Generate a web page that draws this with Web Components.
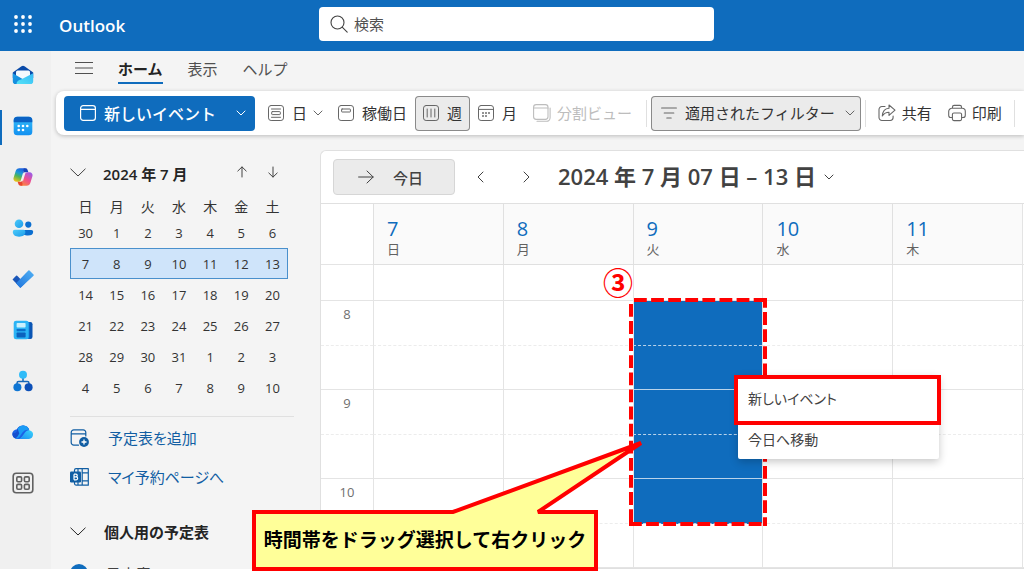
<!DOCTYPE html>
<html lang="ja">
<head>
<meta charset="utf-8">
<title>Outlook - 予定表</title>
<style>
  html, body { margin: 0; height: 100%; background: #fff; }
  body { overflow: hidden; font-family: "Open Sans", "Noto Sans CJK JP", sans-serif; font-size: 15px; color: #424242; }
</style>
</head>
<body>
<outlook-app></outlook-app>

<script>
const JP = '"Noto Sans CJK JP", sans-serif';

/* Registers an element whose shadow root is cloned from one template. */
function define(name, css, html, setup) {
  const template = document.createElement('template');
  template.innerHTML = `<style>*{box-sizing:border-box}${css}</style>${html}`;
  customElements.define(name, class extends HTMLElement {
    constructor() {
      super();
      this.attachShadow({ mode: 'open' }).appendChild(template.content.cloneNode(true));
    }
    connectedCallback() { if (setup) setup(this, this.shadowRoot); }
  });
}

/* ---------- icons ---------- */
const line = (d, w = 1) => `<g fill="none" stroke="currentColor" stroke-width="${w}" stroke-linecap="round" stroke-linejoin="round">${d}</g>`;
const ICONS = {
  waffle: ['18 18', [0, 1, 2].map(r => [0, 1, 2].map(c => `<circle cx="${2 + c * 7}" cy="${2 + r * 7}" r="1.9" fill="#fff"/>`).join('')).join('')],
  search: ['18 18', line('<circle cx="7.5" cy="7.5" r="6.5"/><path d="M12.200 12.200l5 5"/>', 1.1)],
  menu: ['18 14', line('<path d="M.5 1.5h17M.5 7h17M.5 12.5h17"/>', 1.2)],
  calendar: ['16 16', line('<rect x=".6" y=".6" width="14.8" height="14.8" rx="2.6"/><path d="M.6 4.4h14.8"/>', 1.2)],
  day: ['16 16', line('<rect x=".5" y=".5" width="15" height="15" rx="2.6"/><path d="M3.5 4h9M3.5 12.3h9"/><rect x="3.7" y="6.6" width="8.6" height="3" rx=".6"/>')],
  workweek: ['16 16', line('<rect x=".5" y=".5" width="15" height="15" rx="2.6"/><rect x="3.6" y="4" width="8.8" height="3" rx=".5"/>')],
  week: ['16 16', line('<rect x=".5" y=".5" width="15" height="15" rx="2.6"/><path d="M4.2 4v8M8 4v8M11.8 4v8"/>')],
  month: ['16 16', line('<rect x=".5" y=".5" width="15" height="15" rx="2.6"/><path d="M.5 4.4h15"/>') + [[5, 8], [8, 8], [11, 8], [5, 11], [8, 11]].map(([x, y]) => `<circle cx="${x}" cy="${y}" r=".95" fill="currentColor"/>`).join('')],
  split: ['18 18', line('<rect x=".6" y=".6" width="14.4" height="14.8" rx="2.6"/><path d="M.6 4h14.4M4 17.3h9.5a3.6 3.6 0 0 0 3.6-3.6V4"/>', 1.1)],
  filter: ['16 12', line('<path d="M.6 1h14.8M3.2 6h9.6M5.8 11h4.4"/>', 1.1)],
  share: ['18 18', line('<path d="M7 2.5H4A2.9 2.9 0 0 0 1 5.400v8.200A2.900 2.900 0 0 0 4 16.500h8.200a2.900 2.900 0 0 0 2.900-2.900V12"/><path d="M11 1l6 5.200-6 5.200V8.300C8 8.300 6 9.500 4.300 12 4.600 7.500 7 4.500 11 4.200z"/>', 1.1)],
  print: ['18 18', line('<path d="M4.300 13.500H3a2.300 2.300 0 0 1-2.300-2.300V7.500A3.200 3.200 0 0 1 3.900 4.300h10.200a3.200 3.200 0 0 1 3.200 3.200v3.700a2.300 2.300 0 0 1-2.300 2.300h-1.300M4.500 4.300V3a1.600 1.600 0 0 1 1.600-1.600h5.800A1.600 1.600 0 0 1 13.500 3v1.300"/><rect x="4.400" y="9" width="9.200" height="7.600" rx="1.500"/>', 1.1)],
  down: ['10 6', line('<path d="M1 1l4 4 4-4"/>', 1)],
  expand: ['16 9', line('<path d="M.8 1L8 8l7.200-7"/>', 1)],
  prev: ['7 12', line('<path d="M6 1L1 6l5 5"/>', 1)],
  next: ['7 12', line('<path d="M1 1l5 5-5 5"/>', 1)],
  up: ['10 12', line('<path d="M5 11V1M.8 5L5 .9 9.200 5"/>', 1)],
  dn: ['10 12', line('<path d="M5 1v10M.8 7L5 11.100 9.200 7"/>', 1)],
  arrow: ['16 14', line('<path d="M.6 7h14.600M9 1l6.200 6L9 13"/>', 1)],
  addcal: ['20 18', line('<path d="M8.500 16.200H3.800A2.600 2.600 0 0 1 1.200 13.600V3.400A2.600 2.600 0 0 1 3.800.800h9.400a2.600 2.600 0 0 1 2.600 2.600V7M1.200 4.800h14.600"/>', 1.2) + '<circle cx="14" cy="13" r="4.900" fill="currentColor"/><path d="M14 10.500v5M11.500 13h5" stroke="#fff" stroke-width="1.300"/>'],
  bookings: ['20 18', line('<path d="M4.500 4V2.200A1.600 1.600 0 0 1 6 .7h12.300v16.500H6a1.600 1.600 0 0 1-1.500-1.600V14M12.200.700v16.500M8 .700V4M8 14v3M12 4.800h6.300M12 12.800h6.300"/>', 1.2) + '<rect x="0" y="3.500" width="11" height="11" rx="1.200" fill="currentColor"/><path d="M4 6.200v5.600M4 6.200h1.900a1.300 1.300 0 0 1 0 2.700H4h2.200a1.400 1.400 0 0 1 0 2.900H4" fill="none" stroke="#fff" stroke-width="1.200"/>'],
  dot: ['18 18', '<circle cx="9" cy="9" r="9" fill="#0f6cbd"/><path d="M5 9l3 3 5-6" fill="none" stroke="#fff" stroke-width="1.500"/>'],

  mail: ['22 20', `<defs><linearGradient id="a" x1="0" y1="0" x2="1" y2="1"><stop offset="0" stop-color="#1b9de8"/><stop offset="1" stop-color="#0f7fd6"/></linearGradient><linearGradient id="b" x1="1" y1="0" x2="0" y2="1"><stop offset="0" stop-color="#35b8f5"/><stop offset="1" stop-color="#55e3f7"/></linearGradient></defs>
    <path d="M.800 7.500L9.500 1.300a2.600 2.600 0 0 1 3 0l8.700 6.200V13H.800z" fill="#0a4aa8"/>
    <rect x="4" y="5.600" width="14" height="9" rx="1.600" fill="#f4fafe"/>
    <path d="M.800 8.200L11 14.200l3 4.900H3.600A2.800 2.800 0 0 1 .800 16.300z" fill="url(#a)"/>
    <path d="M21.200 8.200v8.100a2.800 2.800 0 0 1-2.800 2.800H4.500c0-2.700 2-4.300 4.500-4.600z" fill="url(#b)"/>`],
  cal: ['20 20', `<defs><linearGradient id="a" x1="0" y1="0" x2="0" y2="1"><stop offset="0" stop-color="#35bdf8"/><stop offset="1" stop-color="#1290f0"/></linearGradient></defs>
    <rect x=".700" y=".700" width="18.600" height="18.600" rx="3.600" fill="url(#a)"/><path d="M.700 6.200V4.300A3.600 3.600 0 0 1 4.300.700h11.400a3.600 3.600 0 0 1 3.600 3.600v1.900z" fill="#0b62c4"/>
    ${[[5.7, 10], [10, 10], [14.3, 10], [5.7, 14], [10, 14]].map(([x, y]) => `<circle cx="${x}" cy="${y}" r="1.300" fill="#fff"/>`).join('')}`],
  copilot: ['20 18', `<defs><linearGradient id="a" x1=".600" y1="0" x2=".200" y2="1"><stop offset="0" stop-color="#1d5fe0"/><stop offset=".350" stop-color="#1b9ad8"/><stop offset=".600" stop-color="#4db45a"/><stop offset="1" stop-color="#f2c414"/></linearGradient><linearGradient id="b" x1=".800" y1="0" x2=".200" y2="1"><stop offset="0" stop-color="#9a5be8"/><stop offset=".500" stop-color="#ef4f8e"/><stop offset="1" stop-color="#fb8a3c"/></linearGradient></defs>
    <path d="M13.500 2.200A3 3 0 0 0 10.700.300H6.400A4 4 0 0 0 2.600 3.200L.600 9.800a3 3 0 0 0 2.800 3.900h2.300c1 0 1.900-.700 2.200-1.700l2.300-7.800c.300-1 1-2 2-2z" fill="url(#a)"/>
    <path d="M10.700.300h1.800c1 0 1.800.700 2.100 1.600l.8 2.400h-3.200c-1 0-1.700.500-2 1.400z" fill="#1745b8"/>
    <path d="M6.500 15.800a3 3 0 0 0 2.800 1.900h4.300a4 4 0 0 0 3.800-2.900l2-6.600a3 3 0 0 0-2.800-3.900h-2.300c-1 0-1.900.700-2.200 1.700l-2.300 7.800c-.300 1-1 2-2 2z" fill="url(#b)"/>
    <path d="M9.300 17.700H7.500c-1 0-1.800-.700-2.100-1.600l-.8-2.400h3.200c1 0 1.700-.500 2-1.400z" fill="#e8472e"/>`],
  people: ['22 18', `<defs><linearGradient id="a" x1="0" y1="0" x2="1" y2="1"><stop offset="0" stop-color="#4ccbfa"/><stop offset="1" stop-color="#1c9bea"/></linearGradient></defs>
    <circle cx="16.300" cy="5.600" r="3.100" fill="#0b6fd0"/><path d="M10 11h9.400a1.800 1.800 0 0 1 1.800 1.800c0 2.600-2 3.800-5.200 3.800-3.400 0-6-1.200-6-3.800z" fill="#0b6fd0"/>
    <circle cx="7" cy="4.700" r="4.300" fill="url(#a)"/><path d="M2.800 10.800h8.600a2 2 0 0 1 2 2c0 3.200-2.600 4.900-6.300 4.900S.800 16 .800 12.800a2 2 0 0 1 2-2z" fill="url(#a)"/>`],
  todo: ['22 18', `<defs><linearGradient id="a" x1="0" y1="1" x2="1" y2="0"><stop offset="0" stop-color="#1f74dc"/><stop offset="1" stop-color="#4fb0f4"/></linearGradient></defs>
    <path d="M.500 9.400l3.600-3.600a.8.800 0 0 1 1.100 0l7.600 7.600-4.400 4.300z" fill="#1a56b8"/><path d="M4 13.200L16.400.600a.8.800 0 0 1 1.100 0l4 4a.8.800 0 0 1 0 1.100L8.900 17.600a.8.800 0 0 1-1.100 0z" fill="url(#a)"/>`],
  news: ['20 20', `<rect x="10" y="2" width="9.500" height="17" rx="2.200" fill="#0a55b4"/><rect x="14" y="2" width="2.500" height="17" fill="#1276d2"/>
    <rect x=".700" y=".700" width="15" height="18.600" rx="2.400" fill="#2cb4f5"/><rect x="3.600" y="3" width="9" height="4.600" rx=".8" fill="#c9f0fd"/><rect x="3.600" y="9" width="9" height="2.200" rx=".6" fill="#0c6fcb"/><rect x="3.600" y="12.500" width="9" height="5" rx=".8" fill="#0c62bd"/>`],
  org: ['20 22', `<path d="M10 8v3.500M4 15v-1.800a1.700 1.700 0 0 1 1.700-1.700h8.600a1.700 1.700 0 0 1 1.700 1.700V15" fill="none" stroke="#1667b8" stroke-width="1.500"/>
    <circle cx="10" cy="4.700" r="4" fill="#30bcf8"/><circle cx="4.400" cy="17.300" r="4" fill="#0f76d4"/><circle cx="15.600" cy="17.300" r="4" fill="#0c50b8"/>`],
  cloud: ['22 16', `<defs><linearGradient id="a" x1="0" y1="1" x2="1" y2="0"><stop offset="0" stop-color="#1b8df2"/><stop offset="1" stop-color="#3ad4fb"/></linearGradient></defs>
    <path d="M5.200 14.900A4.800 4.800 0 0 1 5 5.300a6.600 6.600 0 0 1 12.300 1l-9 8.600z" fill="#1c63e6"/>
    <path d="M5.600 4.400A6.600 6.600 0 0 1 17 5.600c-3-.8-5 .5-6.500 2.500l-3 4.200c-1 1.400-2.500 2.600-4.500 2A4.800 4.800 0 0 1 .900 8.500c2 1.500 3 .2 4-1.200z" fill="#164fce"/>
    <path d="M5.600 4.400A6.600 6.600 0 0 1 17.300 6c-3-.8-5.300.5-6.800 2.500l-3 4.200c-1 1.400-2.500 2.300-4.200 1.700 2-1 2.700-3 4-5z" fill="#1a9bf5"/>
    <path d="M7 14.900c2-.5 2.800-2 4-3.600l2-2.700c1.500-2 3.500-2.600 5-2.100a4.300 4.300 0 0 1-1 8.400z" fill="url(#a)"/>`],
  apps: ['22 22', `<g fill="none" stroke="#616161" stroke-width="1.600"><rect x="1.200" y="1.200" width="19.600" height="19.600" rx="3"/><rect x="4.800" y="4.900" width="4.800" height="4.800" rx="1.200"/><rect x="12.400" y="4.900" width="4.800" height="4.800" rx="1.200"/><rect x="4.800" y="12.400" width="4.800" height="4.800" rx="1.200"/><rect x="12.400" y="12.400" width="4.800" height="4.800" rx="1.200"/></g>`]
};
define('ol-icon', ':host{display:inline-flex;flex:none}.art{display:flex}svg{display:block}', '<span class="art"></span>', (host, root) => {
  const [size, body] = ICONS[host.getAttribute('name')];
  const [w, h] = size.split(' ');
  root.querySelector('.art').innerHTML = `<svg width="${w}" height="${h}" viewBox="0 0 ${w} ${h}" aria-hidden="true">${body}</svg>`;
});

/* ---------- top bar ---------- */
define('top-bar', `
  :host{display:grid;grid-template-columns:319px minmax(120px,395px) 1fr;align-items:center;height:51px;background:#0f6cbd;color:#fff}
  .brand{display:flex;align-items:center;gap:27px;padding-left:14px;font-size:17px;font-weight:600}
  button{display:flex;padding:0 0 3px;border:0;background:none}
  label{display:flex;align-items:center;gap:6px;height:34px;margin-bottom:3px;padding:0 11px;background:#fff;border-radius:4px;color:#424242}
  input{flex:1;min-width:0;border:0;outline:0;padding:0 0 2px;background:none;font:15px ${JP};color:#424242}
  input::placeholder{color:#505050;opacity:1}`, `
  <div class="brand"><button aria-label="アプリ起動ツール"><ol-icon name="waffle"></ol-icon></button><span>Outlook</span></div>
  <label><ol-icon name="search"></ol-icon><input type="search" placeholder="検索" aria-label="検索"></label>`);

/* ---------- app rail ---------- */
define('rail-link', `
  :host{display:block}
  a{display:flex;justify-content:center;align-items:center;height:51px;padding:0 7px 3px 0;border-left:2px solid transparent}
  :host([current]) a{border-image:linear-gradient(transparent 8px,#0f6cbd 8px,#0f6cbd 43px,transparent 43px) 0 0 0 2}`,
  '<a href="#"></a>', (host, root) => {
    const a = root.querySelector('a');
    a.setAttribute('aria-label', host.getAttribute('label'));
    a.innerHTML = `<ol-icon name="${host.getAttribute('icon')}"></ol-icon>`;
  });
define('app-rail', ':host{display:block;background:#f0f0f0}nav{display:flex;flex-direction:column}', `
  <nav>
    <rail-link icon="mail" label="メール"></rail-link>
    <rail-link icon="cal" label="予定表" current></rail-link>
    <rail-link icon="copilot" label="Copilot"></rail-link>
    <rail-link icon="people" label="連絡先"></rail-link>
    <rail-link icon="todo" label="To Do"></rail-link>
    <rail-link icon="news" label="ニュースレター"></rail-link>
    <rail-link icon="org" label="組織エクスプローラー"></rail-link>
    <rail-link icon="cloud" label="OneDrive"></rail-link>
    <rail-link icon="apps" label="その他のアプリ"></rail-link>
  </nav>`);

/* ---------- menu tabs ---------- */
define('menu-tabs', `
  :host{display:flex;align-items:center;gap:25px;height:40px;padding-left:24px;font-family:${JP}}
  button{display:flex;padding:0;border:0;background:none;font:15px/30px ${JP};color:#505050}
  .menu{padding-bottom:6px}
  .on{font-weight:700;color:#242424;box-shadow:inset 0 -2px #0f6cbd}
  .tabs{display:flex;gap:25px;padding-bottom:4px}`, `
  <button class="menu" aria-label="メニュー"><ol-icon name="menu"></ol-icon></button>
  <div class="tabs"><button class="on">ホーム</button><button>表示</button><button>ヘルプ</button></div>`);

/* ---------- ribbon ---------- */
define('tool-button', `
  :host{display:block;flex:none}
  button{display:flex;align-items:center;gap:8px;height:35px;padding:0 8px 1px;border:0;border-radius:4px;background:none;font:15px ${JP};color:#333;white-space:nowrap}
  ol-icon{color:#666}
  :host([wide]) button{gap:6px}
  :host([pressed]) button{background:#ebebeb;box-shadow:inset 0 0 0 1px #8a8a8a}
  :host([menu]) button{padding-right:7px}
  .down{margin-left:-2px}
  :host([filter]) button{padding:0 6px 1px 10px}
  :host([filter]) .down{margin-left:2px}
  :host([disabled]) button, :host([disabled]) ol-icon{color:#bdbdbd}
  :host([disabled]) button{padding-right:10px}
  :host([primary]) button{width:191px;padding:0 9px 1px 16px;background:#0f6cbd;color:#fff;font-size:16px;font-weight:500}
  :host([primary]) ol-icon{color:#fff}
  :host([primary]) .down{margin-left:auto}`,
  '<button><slot></slot></button>', (host, root) => {
    const b = root.querySelector('button');
    b.disabled = host.hasAttribute('disabled');
    b.insertAdjacentHTML('afterbegin', `<ol-icon name="${host.getAttribute('icon')}"></ol-icon>`);
    if (host.hasAttribute('menu')) b.insertAdjacentHTML('beforeend', '<ol-icon class="down" name="down"></ol-icon>');
  });
define('ribbon-bar', `
  :host{display:flex;align-items:center;height:44px;margin-left:5px;padding-left:8px;background:#fff;border-radius:8px 0 0 8px;box-shadow:0 1px 4px rgba(0,0,0,.24);overflow:hidden}
  hr{flex:none;width:1px;height:27px;margin:0 4px;border:0;background:#e0e0e0}
  .new{margin-right:5px}`, `
  <tool-button class="new" icon="calendar" primary menu>新しいイベント</tool-button>
  <tool-button icon="day" menu>日</tool-button>
  <tool-button icon="workweek">稼働日</tool-button>
  <tool-button icon="week" pressed>週</tool-button>
  <tool-button icon="month">月</tool-button>
  <tool-button icon="split" wide disabled>分割ビュー</tool-button>
  <hr>
  <tool-button icon="filter" pressed menu filter>適用されたフィルター</tool-button>
  <hr>
  <tool-button icon="share" wide>共有</tool-button>
  <tool-button icon="print" wide>印刷</tool-button>
  <hr>`);

/* ---------- side panel ---------- */
define('mini-calendar', `
  :host{display:block}
  header{display:flex;align-items:center;height:40px;color:#424242}
  h2{flex:1;margin:0 0 0 17px;padding-bottom:2px;font-size:15px;font-weight:600;color:#242424}
  button{display:flex;justify-content:center;width:31px;padding:0 0 4px;border:0;background:none;color:inherit}
  .fold{width:16px}
  table{width:218px;border-collapse:collapse;table-layout:fixed;text-align:center;font-size:13px;color:#333}
  th{height:23px;padding:0;font:14px ${JP}}
  td{height:31px;padding:0}
  .sel{background:#cfe4fa;outline:1px solid #4a90cc;outline-offset:-1px}`, `
  <header><button class="fold" aria-label="折りたたむ"><ol-icon name="expand"></ol-icon></button><h2>2024 年 7 月</h2>
    <button aria-label="前の月"><ol-icon name="up"></ol-icon></button><button aria-label="次の月"><ol-icon name="dn"></ol-icon></button></header>
  <table><thead><tr></tr></thead><tbody></tbody></table>`, (host, root) => {
    root.querySelector('thead tr').innerHTML = [...'日月火水木金土'].map(d => `<th scope="col">${d}</th>`).join('');
    const start = Date.UTC(2024, 5, 30), DAY = 864e5;
    root.querySelector('tbody').innerHTML = [0, 1, 2, 3, 4, 5].map(w => `<tr${w === 1 ? ' class="sel"' : ''}>` +
      [0, 1, 2, 3, 4, 5, 6].map(d => `<td>${new Date(start + (w * 7 + d) * DAY).getUTCDate()}</td>`).join('') + '</tr>').join('');
  });
define('side-link', `
  :host{display:block}
  a{display:flex;align-items:center;gap:18px;height:39px;font:15px ${JP};font-feature-settings:"palt";color:#115ea3;text-decoration:none}`,
  '<a href="#"><slot></slot></a>', (host, root) =>
    root.querySelector('a').insertAdjacentHTML('afterbegin', `<ol-icon name="${host.getAttribute('icon')}"></ol-icon>`));
define('side-panel', `
  :host{display:block;min-height:0;padding:4px 26px 0 19px;overflow:hidden}
  .cal{width:218px}
  .links{margin-top:13px;padding-top:1px;border-top:1px solid #e0e0e0}
  h3{display:flex;align-items:center;gap:18px;height:36px;margin:17px 0 0;font:700 15px ${JP};color:#242424}
  label{display:flex;align-items:center;gap:18px;height:48px;font:15px ${JP};color:#424242}`, `
  <mini-calendar class="cal"></mini-calendar>
  <div class="links"><side-link icon="addcal">予定表を追加</side-link><side-link icon="bookings">マイ予約ページへ</side-link></div>
  <h3><ol-icon name="expand"></ol-icon>個人用の予定表</h3>
  <label><ol-icon name="dot"></ol-icon>予定表</label>`);

/* ---------- week view ---------- */
define('week-toolbar', `
  :host{display:flex;align-items:center;height:52px;padding-left:12px;color:#424242}
  button{display:flex;align-items:center;justify-content:center;padding:0;border:0;background:none;color:inherit}
  .today{gap:19px;width:122px;height:36px;margin-right:22px;padding-right:9px;padding-left:2px;background:#ebebeb;border:1px solid #d6d6d6;border-radius:4px;font:500 15px ${JP}}
  .nav{width:7px;margin-right:39px}
  .next{margin-right:28px}
  .title{gap:8px;padding-bottom:4px;font:600 22px "Open Sans",${JP};white-space:nowrap}
  .title ol-icon{padding-top:4px}`, `
  <button class="today"><ol-icon name="arrow"></ol-icon>今日</button>
  <button class="nav" aria-label="前の週"><ol-icon name="prev"></ol-icon></button>
  <button class="nav next" aria-label="次の週"><ol-icon name="next"></ol-icon></button>
  <button class="title">2024 年 7 月 07 日 – 13 日<ol-icon name="down"></ol-icon></button>`);
define('day-heading', `
  :host{display:flex;flex-direction:column;justify-content:center;padding:6px 0 0 13px;border:solid #e0e0e0;border-width:0 0 1px 1px;background:#fafafa}
  b{font-size:20px;line-height:24px;font-weight:400;color:#0f6cbd}
  span{font:13px/16px ${JP};color:#616161}
  slot{font:inherit}`, '<b><slot name="date"></slot></b><span><slot></slot></span>');
define('week-view', `
  :host{display:block;background:#fff;border:1px solid #e0e0e0;border-right:0;border-radius:6px 0 0 0;overflow:hidden}
  .grid{position:relative;display:grid;grid-template-columns:52px repeat(5,1fr) 2px;grid-template-rows:61px 36px 45px 44px 45px 44px 45px 44px;border-top:1px solid #e0e0e0}
  .cell{border-left:1px solid #e4e4e4;border-bottom:1px solid #e4e4e4}
  .half{border-bottom:1px dashed #ececec}
  .time{border-left:0;color:#707070;font-size:13px;line-height:16px;text-align:center;padding-top:5px}
  .picked{background:#0f6cbd;border-bottom-color:#b9d3ea}
  .mark{grid-area:3/4/8/5;position:absolute;inset:0}
  .mark svg{position:absolute;left:-4px;top:-3px;overflow:visible}`, `
  <week-toolbar></week-toolbar>
  <div class="grid"></div>`, (host, root) => {
    const grid = root.querySelector('.grid');
    const days = [['7', '日'], ['8', '月'], ['9', '火'], ['10', '水'], ['11', '木']];
    let html = '<div class="cell time"></div>' + days.map(([n, d]) => `<day-heading><span slot="date">${n}</span>${d}</day-heading>`).join('') + '<div class="cell"></div>';
    const labels = ['', '8', '', '9', '', '10', ''];
    labels.forEach((text, row) => {
      const half = row % 2 ? ' half' : '';
      html += `<div class="cell time${half}">${text}</div>`;
      for (let c = 0; c < 6; c++) html += `<div class="cell${half}${c === 2 && row > 0 && row < 6 ? ' picked' : ''}"></div>`;
    });
    /* dashed outline round the dragged range */
    html += `<div class="mark"><svg width="137" height="228" aria-hidden="true"><g stroke="#f00" stroke-width="4" stroke-dasharray="12.800 4.300">
      <path d="M5 2h133"/><path d="M2 6v222"/><path d="M136 0v228" stroke-dashoffset="3"/><path d="M0 226h138"/></g></svg></div>`;
    grid.innerHTML = html;
  });

/* ---------- overlays ---------- */
define('context-menu', `
  :host{display:block;width:201px;background:#fff;border-radius:2px;box-shadow:0 3px 8px rgba(0,0,0,.22)}
  button{display:block;width:100%;padding:0 10px;border:0;background:none;text-align:left;font:14px/38px ${JP};font-feature-settings:"palt";color:#424242}
  .first{height:42px;padding-bottom:4px}
  .ring{margin:0 -2px 0 -4px;border:4px solid #f00}
  .last{padding-bottom:6px;line-height:28px}`, `
  <div class="ring"><button class="first">新しいイベント</button></div><button class="last">今日へ移動</button>`);
define('call-out', `
  :host{display:block;width:346px;color:#000}
  svg{position:absolute;left:0;top:0;overflow:visible}
  p{position:relative;margin:0;padding:68px 0 0;text-align:center;font:700 19px/60px ${JP};white-space:nowrap}`, `
  <svg width="346" height="130" aria-hidden="true"><path d="M2 71H201L389 2 286 71H344V128H2z" fill="#ff9" stroke="#f00" stroke-width="4" stroke-linejoin="miter" stroke-miterlimit="2"/></svg>
  <p><slot></slot></p>`);

/* ---------- shell ---------- */
define('outlook-app', `
  :host{display:grid;grid-template:51px minmax(0,1fr)/51px minmax(0,1fr);height:calc(100vh - 2px);position:relative;background:#f4f4f4}
  top-bar{grid-column:1/-1}
  main{display:grid;grid-template-rows:40px 44px 15px minmax(0,1fr);min-width:0}
  .body{grid-row:4;display:grid;grid-template-columns:269px minmax(0,1fr);min-height:0}
  context-menu{position:absolute;left:738px;top:375px}
  .step{position:absolute;left:603px;top:258px;font:700 30px/47px ${JP};color:#f00}
  call-out{position:absolute;left:252px;top:441px}`, `
  <top-bar></top-bar>
  <app-rail></app-rail>
  <main><menu-tabs></menu-tabs><ribbon-bar></ribbon-bar><div class="body"><side-panel></side-panel><week-view></week-view></div></main>
  <span class="step">③</span>
  <context-menu></context-menu>
  <call-out>時間帯をドラッグ選択して右クリック</call-out>`);
</script>
</body>
</html>
